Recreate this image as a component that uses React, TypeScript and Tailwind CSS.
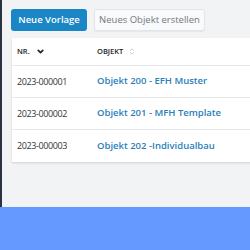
import { ChevronDown, ChevronsUpDown } from 'lucide-react';

const rows = [
  { nr: '2023-000001', objekt: 'Objekt 200 - EFH Muster' },
  { nr: '2023-000002', objekt: 'Objekt 201 - MFH Template' },
  { nr: '2023-000003', objekt: 'Objekt 202 -Individualbau' },
];

export default function App() {
  return (
    <div className="w-[250px] h-[250px] flex flex-col overflow-hidden font-['Open_Sans',sans-serif]">
      <div className="h-[207px] flex">
        <div className="w-[2px] bg-[#2b3343]" />
        <div className="flex-1 bg-[#f2f3f5] pl-[9px] pt-[9px] overflow-hidden">
          {/* Actions */}
          <div className="flex gap-[7px]">
            <button className="h-[22px] w-[76px] rounded-[3px] bg-[#1a86c5] text-white text-[9.5px] font-semibold">
              Neue Vorlage
            </button>
            <button className="h-[22px] w-[111px] rounded-[3px] bg-[#f9fafb] border border-[#e3e5e8] shadow-[0_1px_1px_rgba(0,0,0,0.05)] text-[#74787e] text-[9.5px]">
              Neues Objekt erstellen
            </button>
          </div>

          {/* Table card */}
          <div className="mt-[7px] ml-px w-[260px] bg-white shadow-[0_1px_2px_rgba(0,0,0,0.15)] text-[9.5px]">
            <div className="h-[28px] flex items-center px-[5px] border-b border-[#e6e8eb] text-[7.5px] font-semibold text-[#222]">
              <div className="w-[80px] flex items-center gap-[6px]">
                <span>NR.</span>
                <ChevronDown className="w-[9px] h-[9px]" strokeWidth={4.5} />
              </div>
              <div className="flex items-center gap-[5px]">
                <span>OBJEKT</span>
                <ChevronsUpDown className="w-[8px] h-[9px] text-[#c4c8cd]" strokeWidth={2.5} />
              </div>
            </div>
            {rows.map((r, i) => (
              <div
                key={r.nr}
                className={`h-[32px] flex items-center px-[5px] ${i < rows.length - 1 ? 'border-b border-[#e6e8eb]' : ''}`}
              >
                <div className="w-[80px] text-[#333] text-[9px] tracking-[-0.4px]">{r.nr}</div>
                <div className="text-[#2a80b9] font-semibold">{r.objekt}</div>
              </div>
            ))}
          </div>
        </div>
      </div>
      <div className="flex-1 bg-[#6699ff]" />
    </div>
  );
}
